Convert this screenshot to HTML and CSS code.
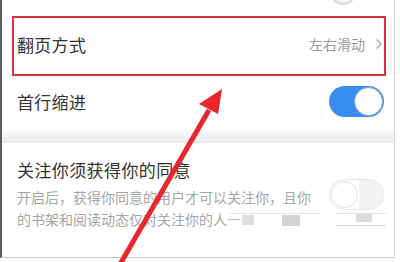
FILE: index.html
```html
<!DOCTYPE html>
<html>
<head>
<meta charset="utf-8">
<link rel="stylesheet" href="styles.css">
</head>
<body>
<div class="frame">
  <div class="prev-row"><div class="prev-knob"></div></div>
  <div class="row row-page">
    <span class="label">翻页方式</span>
    <span class="value">左右滑动
      <svg class="chev" width="8" height="12" viewBox="0 0 8 12"><polyline points="1.5,1.5 6,6 1.5,10.5" fill="none" stroke="#a8a8a8" stroke-width="1.4"/></svg>
    </span>
    <div class="redbox"></div>
  </div>
  <div class="row row-indent">
    <span class="label">首行缩进</span>
    <div class="switch on"><div class="knob"></div></div>
  </div>
  <div class="band"></div>
  <div class="follow">
    <div class="follow-text">
      <div class="title">关注你须获得你的同意</div>
      <div class="desc">开启后，获得你同意的用户才可以关注你，且你<br>的书架和阅读动态仅对关注你的人<span class="dash">一</span></div>
    </div>
    <div class="switch off"><div class="knob"></div></div>
  </div>
  <div class="smudge s1"></div>
  <div class="smudge s2"></div>
  <div class="smudge s3"></div>
  <div class="smudge s4"></div>
  <div class="smudge s5"></div>
  <div class="smudge s6"></div>
  <svg class="arrow" width="400" height="262" viewBox="0 0 400 262">
    <line x1="119" y1="266" x2="209" y2="110" stroke="#e8262b" stroke-width="5"/>
    <polygon points="222,89 199,104 218,114" fill="#e8262b"/>
  </svg>
</div>
</body>
</html>
```
FILE: styles.css
```css
html, body {
  margin: 0;
  padding: 0;
  background: #fff;
}
body {
  width: 400px;
  height: 262px;
  overflow: hidden;
  font-family: "Noto Sans CJK SC", "Noto Sans", sans-serif;
}
.frame {
  position: relative;
  width: 392px;
  height: 257px;
  border-left: 2px solid #5c5c5c;
  border-right: 1px solid #d4d4d4;
  border-bottom: 1px solid #c8c8c8;
  background: #fff;
}
.prev-row {
  height: 16px;
  overflow: hidden;
  display: flex;
  justify-content: flex-end;
  align-items: flex-end;
  padding-right: 38px;
}
.prev-knob {
  width: 22px;
  height: 22px;
  border-radius: 50%;
  border: 2px solid #d8d8d8;
  background: #f4f4f4;
  margin-bottom: 11px;
}
.row {
  position: relative;
  display: flex;
  align-items: center;
  justify-content: space-between;
  padding-left: 15px;
  padding-right: 10px;
}
.row-page {
  height: 56px;
}
.row-indent {
  height: 58px;
}
.label {
  font-size: 17px;
  color: #333;
  letter-spacing: 0.3px;
}
.value {
  font-size: 14px;
  color: #9a9a9a;
  display: flex;
  align-items: center;
  gap: 10px;
  margin-right: 1px;
}
.chev {
  display: block;
}
.redbox {
  position: absolute;
  left: 10px;
  top: 0;
  box-sizing: border-box;
  width: 374px;
  height: 60px;
  border: 2px solid #d5343b;
}
.switch {
  width: 55px;
  height: 31px;
  border-radius: 16px;
  box-sizing: border-box;
  display: flex;
  align-items: center;
}
.switch.on {
  background: #3a8df0;
  justify-content: flex-end;
  padding-right: 1px;
}
.switch.on .knob {
  width: 29px;
  height: 29px;
  border-radius: 50%;
  background: #fff;
  box-sizing: border-box;
  border: 1px solid #8fa6c4;
}
.band {
  height: 13px;
  background: linear-gradient(#f9f9f9, #ececec);
}
.follow {
  display: flex;
  justify-content: space-between;
  align-items: flex-start;
  padding-left: 15px;
  padding-right: 10px;
  padding-top: 15px;
}
.title {
  font-size: 17px;
  line-height: 24px;
  color: #333;
  letter-spacing: 0.4px;
}
.desc {
  margin-top: 4px;
  font-size: 14px;
  line-height: 22px;
  color: #a6a6a6;
}
.dash {
  color: #c8c8c8;
}
.switch.off {
  margin-top: 21px;
  border: 1.5px solid #e6e6e6;
  background: linear-gradient(90deg, #fff 55%, #f3f3f3 55%);
  padding-left: 1px;
}
.switch.off .knob {
  width: 27px;
  height: 27px;
  border-radius: 50%;
  box-sizing: border-box;
  border: 1.5px solid #e2e2e2;
  background: #fff;
}
.smudge {
  position: absolute;
  background: #e0e0e0;
}
.s1 { left: 228px; top: 213px; width: 90px; height: 1px; background: #e4e4e4; }
.s2 { left: 240px; top: 215px; width: 12px; height: 10px; background: #dedede; }
.s3 { left: 280px; top: 215px; width: 18px; height: 11px; background: #d4d4d4; }
.s4 { left: 334px; top: 213px; width: 50px; height: 1px; background: #e4e4e4; }
.s5 { left: 354px; top: 214px; width: 16px; height: 8px; background: #dcdcdc; }
.s6 { left: 334px; top: 225px; width: 50px; height: 1px; background: #d4d4d4; }
.arrow {
  position: absolute;
  left: -2px;
  top: 0;
  pointer-events: none;
}
```
